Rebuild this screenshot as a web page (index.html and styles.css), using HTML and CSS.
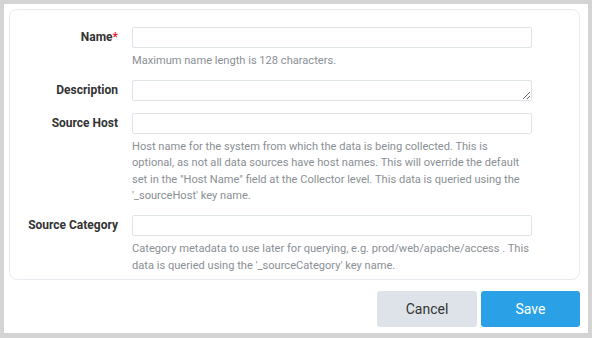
FILE: index.html
```html
<!DOCTYPE html>
<html lang="en">
<head>
    <meta charset="UTF-8">
    <meta name="viewport" content="width=device-width, initial-scale=1.0">
    <title>Edit Source</title>
    <link rel="stylesheet" href="styles.css">
</head>
<body>
    <div class="dialog">
        <div class="card">
            <div class="form-group">
                <label for="name">Name<span class="req">*</span></label>
                <div class="field">
                    <input type="text" id="name">
                    <p class="help">Maximum name length is 128 characters.</p>
                </div>
            </div>
            <div class="form-group">
                <label for="description">Description</label>
                <div class="field">
                    <textarea id="description"></textarea>
                </div>
            </div>
            <div class="form-group">
                <label for="source-host">Source Host</label>
                <div class="field">
                    <input type="text" id="source-host">
                    <p class="help">Host name for the system from which the data is being collected. This is optional, as not all data sources have host names. This will override the default set in the "Host Name" field at the Collector level. This data is queried using the '_sourceHost' key name.</p>
                </div>
            </div>
            <div class="form-group">
                <label for="source-category">Source Category</label>
                <div class="field">
                    <input type="text" id="source-category">
                    <p class="help">Category metadata to use later for querying, e.g. prod/web/apache/access . This data is queried using the '_sourceCategory' key name.</p>
                </div>
            </div>
        </div>
        <div class="actions">
            <button class="btn btn-cancel">Cancel</button>
            <button class="btn btn-save">Save</button>
        </div>
    </div>
</body>
</html>
```

FILE: styles.css
```css
body {
    font-family: Roboto, 'Liberation Sans', sans-serif;
    margin: 0;
    padding: 4px 4px 5px 4px;
    background-color: #d4d4d4;
}
.dialog {
    background: white;
    height: 329px;
    box-sizing: border-box;
    padding: 5px 8px 6px 5px;
}
.card {
    border: 1px solid #e8ecf0;
    border-radius: 8px;
    padding: 17px 47px 5px 0;
}
.form-group {
    display: grid;
    grid-template-columns: 108px 1fr;
    column-gap: 14px;
    margin-bottom: 10.5px;
}
.form-group:last-child {
    margin-bottom: 0;
}
label {
    font-weight: bold;
    font-size: 12px;
    color: #333;
    text-align: right;
    line-height: 21px;
}
.req {
    color: #e8202a;
}
input, textarea {
    display: block;
    width: 100%;
    height: 21px;
    box-sizing: border-box;
    margin: 0;
    padding: 2px 6px;
    border: 1px solid #dfe4ea;
    border-radius: 2px;
    font-family: inherit;
    font-size: 12px;
}
textarea {
    resize: vertical;
    margin-bottom: 1px;
}
.help {
    margin: 5px 0 0;
    font-size: 11.1px;
    line-height: 16.5px;
    color: #8a8f95;
}
.actions {
    display: flex;
    justify-content: flex-end;
    gap: 4px;
    margin-top: 11px;
}
.btn {
    height: 36px;
    border: none;
    border-radius: 3px;
    font-family: inherit;
    font-size: 14px;
    cursor: pointer;
}
.btn-cancel {
    width: 100px;
    background-color: #dde3e9;
    color: #333;
}
.btn-save {
    width: 99px;
    background-color: #2aa1e7;
    color: white;
}
```
